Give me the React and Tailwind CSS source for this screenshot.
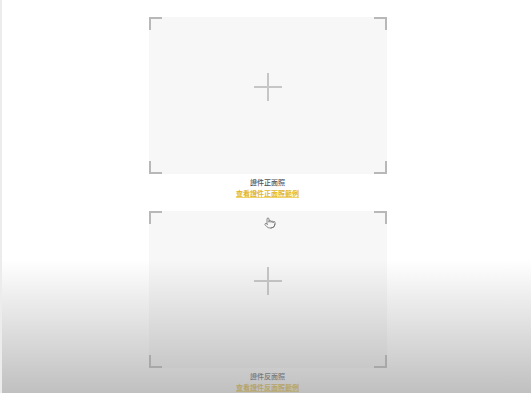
import React from "react";
import { Pointer } from "lucide-react";

const Corner = ({ pos }) => {
  const cls = {
    tl: "top-0 left-0 border-t-2 border-l-2",
    tr: "top-0 right-0 border-t-2 border-r-2",
    bl: "bottom-0 left-0 border-b-2 border-l-2",
    br: "bottom-0 right-0 border-b-2 border-r-2",
  }[pos];
  return <div className={`absolute w-[13px] h-[13px] border-[#b8b8b8] ${cls}`}></div>;
};

const UploadCard = ({ title, link, cursor }) => {
  return (
    <div className="flex flex-col items-center">
      <div className="relative w-[238px] h-[157px] bg-[#f7f7f7] flex items-center justify-center">
        <Corner pos="tl" />
        <Corner pos="tr" />
        <Corner pos="bl" />
        <Corner pos="br" />
        <div className="relative w-[28px] h-[28px] mb-[18px]">
          <div className="absolute left-0 top-[13px] w-[28px] h-[2px] bg-[#c6c6c6]"></div>
          <div className="absolute top-0 left-[13px] w-[2px] h-[28px] bg-[#c6c6c6]"></div>
        </div>
        {cursor && (
          <Pointer
            size={12}
            strokeWidth={1.5}
            className="absolute left-[115px] top-[6px] text-[#666]"
          />
        )}
      </div>
      <p className="mt-[3px] text-[7px] leading-[11px] font-medium text-[#555]">{title}</p>
      <p className="text-[7px] leading-[11px] font-bold text-[#e2b628] underline decoration-[#f0d36a]">
        {link}
      </p>
    </div>
  );
};

export default function App() {
  return (
    <div
      className="relative w-[531px] h-[393px] overflow-hidden bg-white border-l-2 border-[#ececec]"
      style={{ fontFamily: '"Noto Sans CJK TC", "Noto Sans", sans-serif' }}
    >
      <div className="flex flex-col items-center gap-[12px] pt-[17px] pl-[2px]">
        <UploadCard title="證件正面照" link="查看證件正面照範例" />
        <UploadCard title="證件反面照" link="查看證件反面照範例" cursor />
      </div>
      <div className="pointer-events-none absolute left-0 right-0 bottom-0 h-[133px] bg-gradient-to-b from-[rgba(160,160,160,0)] to-[rgba(150,150,150,0.6)]"></div>
    </div>
  );
}
